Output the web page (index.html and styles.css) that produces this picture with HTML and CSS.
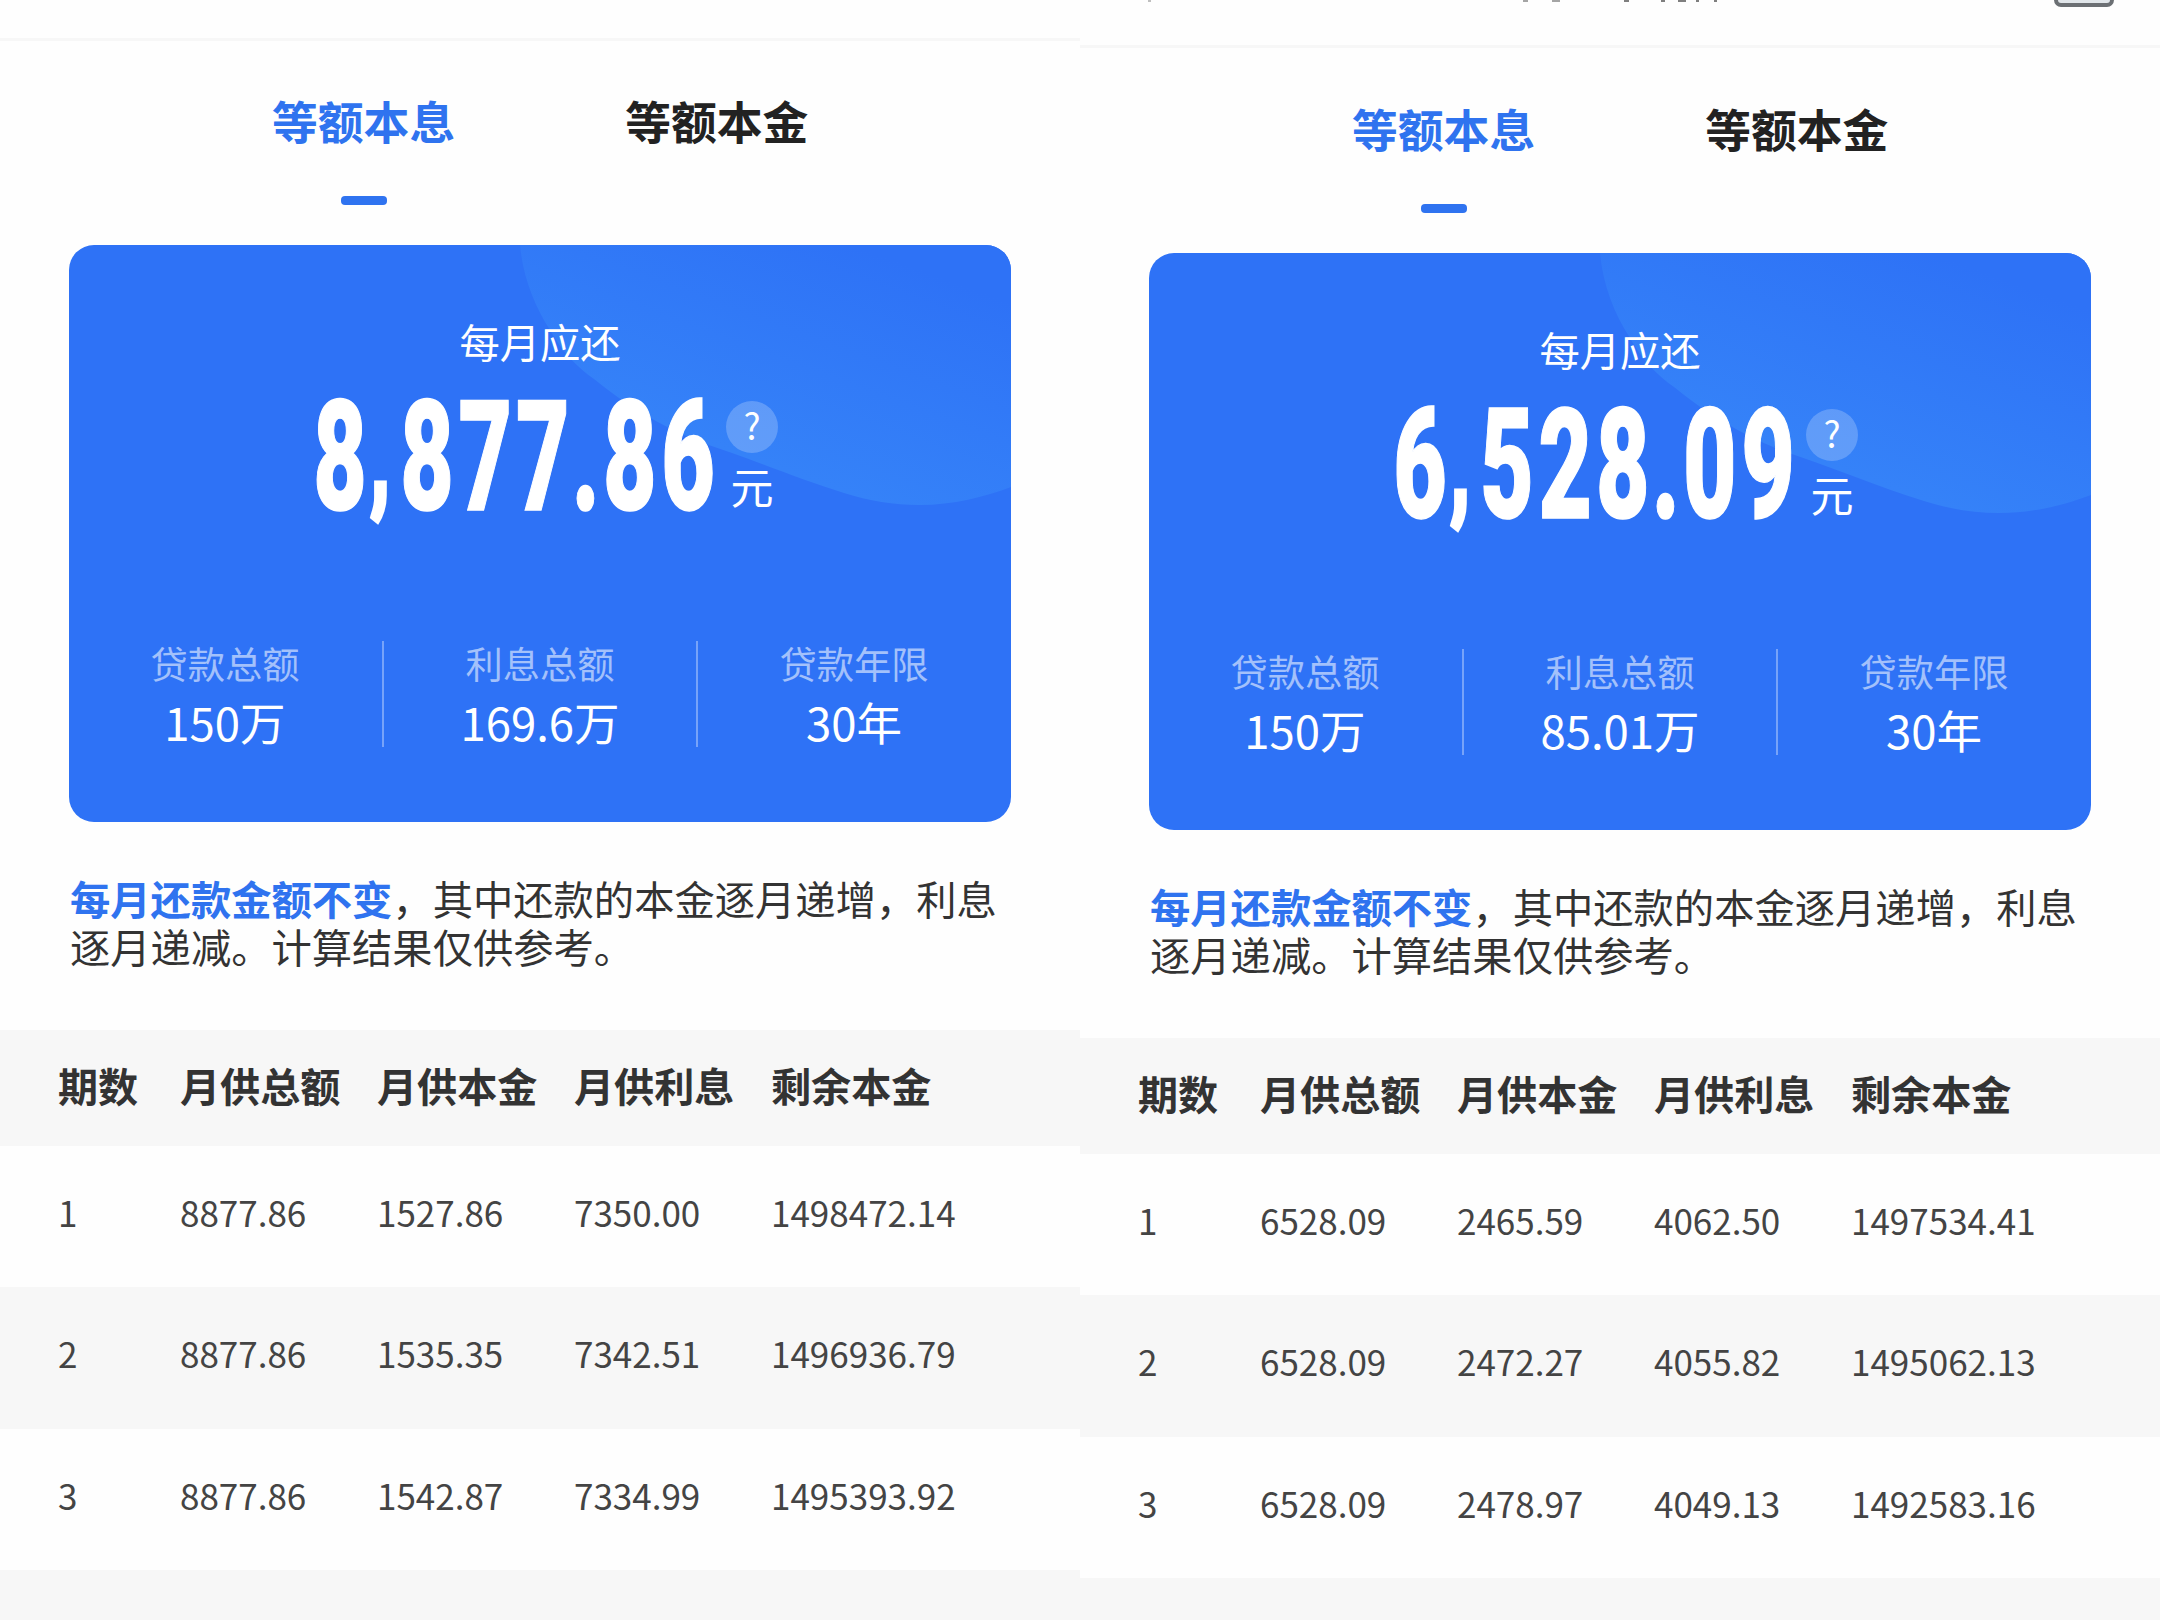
FILE: index.html
```html
<!DOCTYPE html>
<html lang="zh-CN">
<head>
<meta charset="utf-8">
<title>还款明细</title>
<link rel="stylesheet" href="styles.css">
</head>
<body>
<main class="compare">
  <section class="panel">
    <header class="topbar"></header>
    <nav class="tabs"><span class="tab active">等额本息</span><span class="tab">等额本金</span></nav>
    <div class="card">
      <svg class="wave" viewBox="0 0 942 577"><defs><linearGradient id="glow" x1="0.3" y1="0.7" x2="0.75" y2="0.05"><stop offset="0" stop-color="#3582f8"/><stop offset="1" stop-color="#2e72f6"/></linearGradient></defs><path fill="url(#glow)" d="M451 0C454 32 465 60 481 85C494 108 508 122 525 134C557 160 590 180 631 197C680 213 730 234 775 248C800 256 825 260 850 260C885 260 915 252 942 242V0Z"/></svg>
      <div class="caption">每月应还</div>
      <div class="amount">
        <svg class="figure" viewBox="0 0 402 150"><text transform="scale(.6 1)" y="122" x="2 97 147 244 340 433 485 582" dy="0 -12 12">8<tspan class="comma">,</tspan>877.86</text></svg>
        <div class="unit"><span class="help">?</span><span class="yuan">元</span></div>
      </div>
      <div class="stats">
        <div class="stat"><span class="label">贷款总额</span><span class="value">150万</span></div>
        <div class="stat"><span class="label">利息总额</span><span class="value">169.6万</span></div>
        <div class="stat"><span class="label">贷款年限</span><span class="value">30年</span></div>
      </div>
    </div>
    <p class="note"><b>每月还款金额不变</b>，其中还款的本金逐月递增，利息<br>逐月递减。计算结果仅供参考。</p>
    <div class="table">
      <div class="row head"><span>期数</span><span>月供总额</span><span>月供本金</span><span>月供利息</span><span>剩余本金</span></div>
      <div class="row"><span>1</span><span>8877.86</span><span>1527.86</span><span>7350.00</span><span>1498472.14</span></div>
      <div class="row"><span>2</span><span>8877.86</span><span>1535.35</span><span>7342.51</span><span>1496936.79</span></div>
      <div class="row"><span>3</span><span>8877.86</span><span>1542.87</span><span>7334.99</span><span>1495393.92</span></div>
      <div class="row"></div>
    </div>
  </section>
  <section class="panel lower">
    <header class="topbar">
      <svg class="bar-art" viewBox="0 0 1080 44">
        <g fill="#555" opacity=".75"><rect x="68" y="0" width="3" height="2" opacity=".5"/><rect x="443" y="0" width="5" height="2" opacity=".7"/><rect x="472" y="0" width="8" height="2" opacity=".7"/><rect x="544" y="0" width="5" height="2"/><rect x="581" y="0" width="4" height="2"/><rect x="598" y="0" width="8" height="2"/><rect x="616" y="0" width="3" height="2"/><rect x="634" y="0" width="3" height="2"/></g>
        <rect x="976" y="-30" width="56" height="35" rx="5" fill="#e1e6ea" stroke="#6c7074" stroke-width="4"/>
      </svg>
    </header>
    <nav class="tabs"><span class="tab active">等额本息</span><span class="tab">等额本金</span></nav>
    <div class="card">
      <svg class="wave" viewBox="0 0 942 577"><path fill="url(#glow)" d="M451 0C454 32 465 60 481 85C494 108 508 122 525 134C557 160 590 180 631 197C680 213 730 234 775 248C800 256 825 260 850 260C885 260 915 252 942 242V0Z"/></svg>
      <div class="caption">每月应还</div>
      <div class="amount">
        <svg class="figure" viewBox="0 0 402 150"><text transform="scale(.6 1)" y="122" x="2 97 147 244 340 433 485 582" dy="0 -12 12">6<tspan class="comma">,</tspan>528.09</text></svg>
        <div class="unit"><span class="help">?</span><span class="yuan">元</span></div>
      </div>
      <div class="stats">
        <div class="stat"><span class="label">贷款总额</span><span class="value">150万</span></div>
        <div class="stat"><span class="label">利息总额</span><span class="value">85.01万</span></div>
        <div class="stat"><span class="label">贷款年限</span><span class="value">30年</span></div>
      </div>
    </div>
    <p class="note"><b>每月还款金额不变</b>，其中还款的本金逐月递增，利息<br>逐月递减。计算结果仅供参考。</p>
    <div class="table">
      <div class="row head"><span>期数</span><span>月供总额</span><span>月供本金</span><span>月供利息</span><span>剩余本金</span></div>
      <div class="row"><span>1</span><span>6528.09</span><span>2465.59</span><span>4062.50</span><span>1497534.41</span></div>
      <div class="row"><span>2</span><span>6528.09</span><span>2472.27</span><span>4055.82</span><span>1495062.13</span></div>
      <div class="row"><span>3</span><span>6528.09</span><span>2478.97</span><span>4049.13</span><span>1492583.16</span></div>
      <div class="row"></div>
    </div>
  </section>
</main>
</body>
</html>
```
FILE: styles.css
```css
* { box-sizing: border-box; }
body { margin: 0; background: #fefefe; color: #333; font-family: "Noto Sans CJK SC", sans-serif; }
.compare { display: grid; grid-template-columns: 1080px 1080px; height: 1620px; overflow: hidden; }
.panel { height: 1620px; overflow: hidden; }
.topbar { height: 41px; border-bottom: 3px solid #f7f7f7; }
.lower .topbar { height: 48px; }
.bar-art { display: block; width: 1080px; height: 44px; }
.tabs { display: flex; gap: 170px; height: 204px; padding: 49px 0 0 272px; font-size: 45.8px; font-weight: 700; line-height: 60px; color: #222; }
.lower .tabs { height: 205px; padding-top: 50px; }
.tab { display: flex; flex-direction: column; align-items: center; }
.active { color: #2f73ef; }
.active::after { content: ""; width: 46px; height: 9px; margin-top: 46px; border-radius: 4px; background: #2f73f0; }
.card { position: relative; width: 942px; height: 577px; margin-left: 69px; padding-top: 67px; border-radius: 25px; background: #2e72f6; overflow: hidden; color: #fff; }
.wave { position: absolute; inset: 0; width: 942px; height: 577px; }
.caption { position: relative; height: 58px; line-height: 58px; text-align: center; font-size: 40.3px; }
.amount { position: relative; display: flex; height: 150px; margin: 18px 0 0 243px; }
.figure { width: 402px; height: 150px; flex: none; overflow: visible; }
.figure text { font: 900 154px Roboto, sans-serif; fill: #fff; stroke: #fff; stroke-width: 1.5px; }
.figure .comma { font-size: 122px; stroke-width: 5px; }
.unit { display: flex; flex-direction: column; align-items: center; margin: 13px 0 0 11px; width: 54px; }
.help { width: 52px; height: 52px; border-radius: 50%; background: rgba(255,255,255,.22); text-align: center; font-size: 36px; line-height: 47px; }
.yuan { margin-top: 5px; font-size: 43px; line-height: 54px; }
.stats { position: relative; display: grid; grid-template-columns: repeat(3, 314px); align-items: start; margin: 103px 0 0 -1px; height: 107px; }
.stat { display: flex; flex-direction: column; align-items: center; height: 106px; }
.stat + .stat { border-left: 2px solid rgba(255,255,255,.35); }
.label { height: 50px; line-height: 45px; font-size: 37.3px; color: rgba(255,255,255,.56); }
.value { font-size: 45.5px; line-height: 70px; }
.note { height: 208px; margin: 0; padding: 52px 0 0 70px; font-size: 40.3px; line-height: 47.5px; color: #333; white-space: nowrap; }
.note b { color: #2f73ef; }
.row { display: grid; grid-template-columns: 122px 197px 197px 197px 1fr; height: 141.3px; padding: 0 0 9px 58px; align-items: center; font-size: 35px; line-height: 48px; color: #444; }
.row:nth-child(odd) { background: #f7f7f7; }
.head { height: 116px; padding: 0 0 7px 58px; font-size: 40.1px; font-weight: 700; color: #333; }
```
